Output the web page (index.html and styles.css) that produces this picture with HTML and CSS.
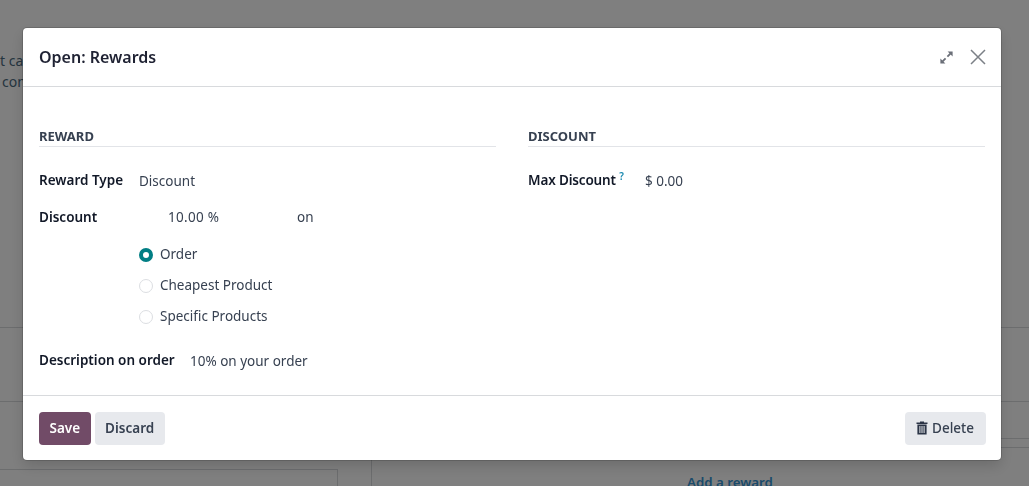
FILE: index.html

```html
<!DOCTYPE html>
<html lang="en">
<head>
    <meta charset="UTF-8">
    <meta name="viewport" content="width=device-width, initial-scale=1.0">
    <title>Open: Rewards</title>
    <link rel="stylesheet" href="styles.css">
</head>
<body>
    <main class="page">
        <div class="page-intro">
            <p>t ca</p>
            <p class="page-intro-second">con</p>
        </div>
        <div class="page-band"></div>
        <div class="page-cols">
            <div class="page-col-left">
                <div class="page-panel"></div>
            </div>
            <div class="page-col-right">
                <div class="page-row page-row-first"></div>
                <div class="page-row page-row-second"></div>
                <div class="page-add"><a href="#">Add a reward</a></div>
            </div>
        </div>
    </main>

    <div class="backdrop"></div>

    <div class="modal">
        <header class="modal-header">
            <h4 class="modal-title">Open: Rewards</h4>
            <div class="modal-actions">
                <svg class="icon-expand" viewBox="0 0 13 13" width="13" height="13">
                    <path d="M7.4 5.6 L10.4 2.6 M5.6 7.4 L2.6 10.4" stroke="#6b6f78" stroke-width="1.8" fill="none"/>
                    <path d="M7.6 0.4 H12.6 V5.4 Z" fill="#6b6f78"/>
                    <path d="M0.4 7.6 V12.6 H5.4 Z" fill="#6b6f78"/>
                </svg>
                <svg class="icon-close" viewBox="0 0 16 16" width="16" height="16">
                    <path d="M1 1 L15 15 M15 1 L1 15" stroke="#7c8087" stroke-width="1.5" fill="none"/>
                </svg>
            </div>
        </header>

        <div class="modal-body">
            <section class="group">
                <h5 class="group-title">Reward</h5>
                <div class="field field-type">
                    <label>Reward Type</label>
                    <span>Discount</span>
                </div>
                <div class="field field-discount">
                    <label>Discount</label>
                    <span class="discount-value">10.00 %</span>
                    <span class="discount-on">on</span>
                </div>
                <div class="radio-list">
                    <div class="radio-item"><span class="radio radio-checked"></span>Order</div>
                    <div class="radio-item"><span class="radio"></span>Cheapest Product</div>
                    <div class="radio-item"><span class="radio"></span>Specific Products</div>
                </div>
                <div class="field field-description">
                    <label>Description on order</label>
                    <span>10% on your order</span>
                </div>
            </section>

            <section class="group">
                <h5 class="group-title">Discount</h5>
                <div class="field field-type">
                    <label class="label-max">Max Discount <sup class="help">?</sup></label>
                    <span>$ 0.00</span>
                </div>
            </section>
        </div>

        <footer class="modal-footer">
            <button class="btn btn-primary">Save</button>
            <button class="btn btn-secondary">Discard</button>
            <button class="btn btn-secondary btn-delete">
                <svg viewBox="0 0 12 14" width="12" height="14">
                    <path d="M4 1.6 V0.6 H8 V1.6 H11.5 V3 H0.5 V1.6 Z" fill="#2b3446"/>
                    <path fill-rule="evenodd" d="M1.4 3.6 H10.6 V13.4 H1.4 Z M3.4 5 V12 H4.4 V5 Z M5.5 5 V12 H6.5 V5 Z M7.6 5 V12 H8.6 V5 Z" fill="#2b3446"/>
                </svg>
                Delete
            </button>
        </footer>
    </div>
</body>
</html>
```

FILE: styles.css

```css
body {
    margin: 0;
    font-family: "Noto Sans", "Open Sans", sans-serif;
    font-size: 13.5px;
    color: #374151;
    background-color: #fff;
    height: 486px;
    overflow: hidden;
}

p {
    margin: 0;
}

.page {
    height: 486px;
    display: flex;
    flex-direction: column;
}

.page-intro {
    flex-shrink: 0;
    padding-top: 51px;
    height: 327px;
    box-sizing: border-box;
    font-size: 14px;
    color: #4a6a80;
    white-space: nowrap;
}

.page-intro-second {
    margin-top: 2px;
    padding-left: 2px;
}

.page-band {
    flex-shrink: 0;
    height: 73px;
    border-top: 1px solid #d8dadd;
}

.page-cols {
    flex: 1;
    min-height: 0;
    overflow: hidden;
    display: flex;
    border-top: 1px solid #d8dadd;
}

.page-col-left {
    width: 371px;
    padding-top: 67px;
    box-sizing: border-box;
}

.page-panel {
    width: 338px;
    height: 100%;
    box-sizing: border-box;
    border-top: 1px solid #d8dadd;
    border-right: 1px solid #d8dadd;
}

.page-col-right {
    flex: 1;
    border-left: 1px solid #d8dadd;
}

.page-row {
    border-bottom: 1px solid #d8dadd;
}

.page-row-first {
    height: 36px;
}

.page-row-second {
    height: 8px;
}

.page-add {
    padding: 25px 0 0 315px;
    line-height: 19px;
}

.page-add a {
    color: #3494d4;
    font-size: 13.3px;
    font-weight: 600;
    text-decoration: none;
}

.backdrop {
    position: fixed;
    inset: 0;
    background-color: rgba(0, 0, 0, 0.5);
}

.modal {
    position: fixed;
    left: 23px;
    top: 28px;
    width: 978px;
    height: 432px;
    display: flex;
    flex-direction: column;
    background-color: #fff;
    border-radius: 4px;
    box-shadow: 0 0 0 1px rgba(0, 0, 0, 0.15), 0 6px 14px rgba(0, 0, 0, 0.15);
}

.modal-header {
    height: 58px;
    display: flex;
    align-items: center;
    justify-content: space-between;
    padding: 0 15px 0 16px;
    border-bottom: 1px solid #d8dadd;
}

.modal-title {
    margin: 0;
    font-size: 16px;
    font-weight: 600;
    color: #1f2233;
}

.modal-actions {
    display: flex;
    align-items: center;
    gap: 17px;
}

.modal-body {
    flex: 1;
    display: grid;
    grid-template-columns: 457px 457px;
    column-gap: 32px;
    padding: 41px 16px 0;
}

.group-title {
    margin: 0;
    padding-bottom: 1px;
    border-bottom: 1px solid #e2e4e8;
    font-size: 13px;
    font-weight: 700;
    text-transform: uppercase;
    color: #374151;
    line-height: 17px;
}

.field {
    display: flex;
    line-height: 19px;
}

.field label {
    font-weight: 600;
    color: #111827;
}

.field-type {
    margin-top: 24px;
}

.field-type span,
.field-description span {
    padding-top: 1px;
}

.field-type label {
    width: 100px;
}

.field-type .label-max {
    width: 117px;
    letter-spacing: -0.15px;
}

.help {
    color: #1b8ab0;
    font-size: 10px;
    line-height: 0;
}

.field-discount {
    margin-top: 17px;
}

.field-discount label {
    width: 129px;
}

.discount-value {
    width: 129px;
    letter-spacing: 0.3px;
}

.radio-list {
    margin: 18px 0 0 100px;
    display: flex;
    flex-direction: column;
    gap: 12px;
}

.radio-item {
    display: flex;
    align-items: center;
    gap: 7px;
    line-height: 19px;
}

.radio {
    width: 12px;
    height: 12px;
    border: 1px solid #dcdee2;
    border-radius: 50%;
    background-color: #fff;
}

.radio-checked {
    width: 6px;
    height: 6px;
    border: 4px solid #017e84;
}

.field-description {
    margin-top: 25px;
}

.field-description label {
    width: 151px;
}

.modal-footer {
    height: 64px;
    display: flex;
    align-items: center;
    gap: 4px;
    padding: 0 15px 0 16px;
    border-top: 1px solid #d8dadd;
}

.btn {
    height: 33px;
    padding: 0 10.5px;
    border: 0;
    border-radius: 4px;
    font-family: inherit;
    font-size: 13.5px;
    font-weight: 600;
}

.btn-primary {
    background-color: #714b67;
    color: #fff;
}

.btn-secondary {
    background-color: #e7e9ed;
    color: #374151;
}

.btn-delete {
    margin-left: auto;
    padding: 0 12px 0 11px;
    font-weight: 500;
    display: flex;
    align-items: center;
    gap: 4px;
}
```
